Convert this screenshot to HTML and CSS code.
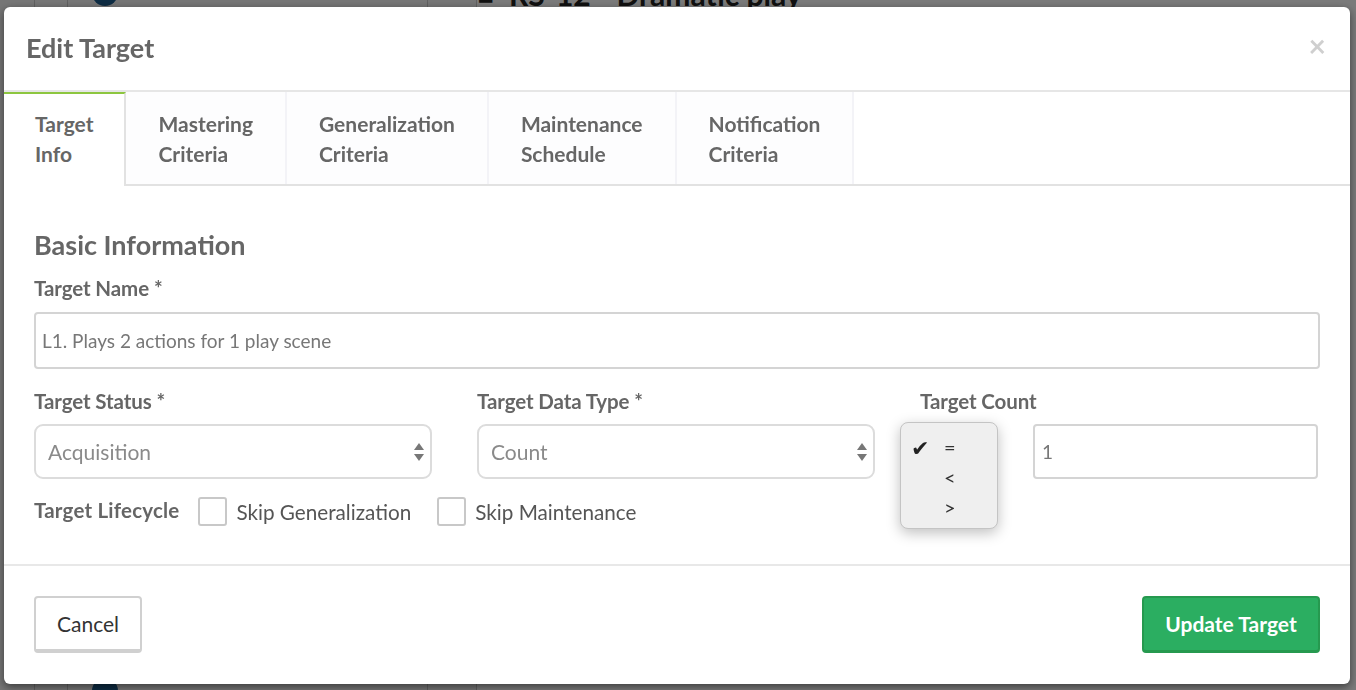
FILE: index.html
```html
<!DOCTYPE html>
<html>
<head>
<meta charset="utf-8">
<title>Edit Target</title>
<link rel="stylesheet" href="styles.css">
</head>
<body>
<div class="page">
  <div class="page-cols">
    <div class="pc pc1"></div>
    <div class="pc pc2"></div>
    <div class="pc pc3"><span class="avatar"></span><span class="avatar bottom"></span></div>
    <div class="pc pc4"></div>
    <div class="pc pc5"><span class="page-title">&#8801; &nbsp;RS-12 - Dramatic play</span></div>
  </div>
</div>
<div class="backdrop"></div>
<div class="modal">
  <div class="modal-header">
    <h4 class="modal-title">Edit Target</h4>
    <span class="close">&times;</span>
  </div>
  <div class="tabs">
    <div class="tab active">Target<br>Info</div>
    <div class="tab">Mastering<br>Criteria</div>
    <div class="tab">Generalization<br>Criteria</div>
    <div class="tab">Maintenance<br>Schedule</div>
    <div class="tab">Notification<br>Criteria</div>
  </div>
  <div class="modal-body">
    <h3 class="section-title">Basic Information</h3>
    <label class="lbl first">Target Name *</label>
    <div class="text-input wide">L1. Plays 2 actions for 1 play scene</div>
    <div class="row3">
      <div class="col">
        <label class="lbl">Target Status *</label>
        <div class="select">Acquisition<span class="arrows"><svg width="12" height="20" viewBox="0 0 12 20"><path d="M6 1 L11 8 L1 8 Z" fill="#777"/><path d="M1 12 L11 12 L6 19 Z" fill="#777"/></svg></span></div>
      </div>
      <div class="col">
        <label class="lbl">Target Data Type *</label>
        <div class="select">Count<span class="arrows"><svg width="12" height="20" viewBox="0 0 12 20"><path d="M6 1 L11 8 L1 8 Z" fill="#777"/><path d="M1 12 L11 12 L6 19 Z" fill="#777"/></svg></span></div>
      </div>
      <div class="col">
        <label class="lbl">Target Count</label>
        <div class="count-row">
          <div class="mini-select">
            <div class="popup">
              <div class="opt"><span class="chk">&#10004;</span><span>=</span></div>
              <div class="opt"><span class="chk"></span><span>&lt;</span></div>
              <div class="opt"><span class="chk"></span><span>&gt;</span></div>
            </div>
          </div>
          <div class="text-input count">1</div>
        </div>
      </div>
    </div>
    <div class="lifecycle">
      <span class="lbl inline">Target Lifecycle</span>
      <span class="cb"></span><span class="cb-text">Skip Generalization</span>
      <span class="cb"></span><span class="cb-text">Skip Maintenance</span>
    </div>
  </div>
  <div class="modal-footer">
    <button class="btn btn-default">Cancel</button>
    <button class="btn btn-success">Update Target</button>
  </div>
</div>
</body>
</html>
```

FILE: styles.css
```css
* { box-sizing: border-box; }
html, body { margin: 0; padding: 0; }
body {
  font-family: Lato, "Open Sans", "Liberation Sans", sans-serif;
  background: #fff;
  width: 1356px;
  height: 690px;
  overflow: hidden;
}

/* background page */
.page { height: 690px; background: #f4f4f4; }
.page-cols { display: flex; height: 690px; }
.pc { border-right: 1px solid #c8c8c8; height: 690px; position: relative; }
.pc1 { width: 35px; }
.pc2 { width: 33px; }
.pc3 { width: 360px; }
.pc4 { width: 49px; }
.pc5 { flex: 1; border-right: 0; background: #fff; }
.avatar {
  position: absolute; left: 24px; top: -20px;
  width: 26px; height: 26px; border-radius: 50%; background: #1d5d8c;
}
.avatar.bottom { top: 678px; }
.page-title {
  position: absolute; left: 0; top: -24px;
  font-size: 30px; font-weight: 700; color: #222; white-space: nowrap;
}

.backdrop {
  position: fixed; inset: 0;
  background: rgba(0,0,0,0.52);
}

/* modal */
.modal {
  position: fixed; left: 4px; top: 7px;
  width: 1346px; height: 677px;
  background: #fff;
  border-radius: 6px;
  box-shadow: 0 3px 9px rgba(0,0,0,0.5);
  display: flex; flex-direction: column;
  overflow: hidden;
}
.modal-header {
  height: 85px;
  padding: 0 24px 0 22px;
  display: flex; align-items: center; justify-content: space-between;
  border-bottom: 2px solid #e6e6e6;
}
.modal-title {
  margin: 0; font-size: 27px; font-weight: 700; color: #666;
  position: relative; top: -1px;
}
.close { font-size: 30px; color: #cfcfcf; font-weight: 700; line-height: 1; position: relative; top: -4px; }

.tabs {
  display: flex;
  height: 94px;
  border-bottom: 2px solid #e2e2e2;
}
.tab {
  padding: 17px 32px 0 32px;
  font-size: 21px; font-weight: 700; line-height: 30px; color: #666;
  background: #fdfdfe;
  border-right: 2px solid #f3f3f7;
}
.tab.active {
  background: #fff;
  border-top: 2px solid #8dc63f;
  border-right: 2px solid #e2e2e2;
  padding-left: 31px; padding-right: 31px; padding-top: 15px;
  margin-bottom: -2px;
  position: relative;
}

.modal-body {
  padding: 0 30px;
  height: 380px;
  border-bottom: 2px solid #e8e8e8;
}
.section-title {
  margin: 44px 0 0 0;
  font-size: 27px; font-weight: 700; color: #666; line-height: 30px;
}
.lbl {
  display: block;
  font-size: 20.5px; font-weight: 700; color: #666; line-height: 24px;
  margin-top: 9px;
  letter-spacing: -0.1px;
}
.lbl.first { margin-top: 16px; }
.text-input {
  border: 2px solid #d4d4d4; border-radius: 4px;
  font-size: 19px; color: #777;
  display: flex; align-items: center;
  padding: 0 6px;
}
.wide { height: 57px; margin-top: 12px; }

.row3 {
  display: grid;
  grid-template-columns: 398px 398px 1fr;
  column-gap: 45px;
  margin-top: 4px;
}
.row3 .lbl { margin-top: 16px; }
.select {
  margin-top: 11px;
  height: 55px;
  border: 2px solid #dcdcdc; border-radius: 9px;
  font-size: 21px; color: #8a8a8a;
  display: flex; align-items: center; justify-content: space-between;
  padding: 0 5px 0 12px;
}
.arrows { display: flex; align-items: center; }

.count-row { display: flex; margin-top: 11px; }
.mini-select { width: 113px; height: 55px; position: relative; }
.popup {
  position: absolute; left: -20px; top: -2px;
  width: 98px; height: 107px;
  background: #efefef;
  border: 1px solid #c4c4c4;
  border-radius: 8px;
  box-shadow: 0 4px 14px rgba(0,0,0,0.25);
  padding-top: 9px;
  font-size: 20px; color: #333;
}
.opt { display: flex; align-items: center; height: 30px; padding-left: 10px; }
.chk { width: 33px; font-size: 22px; color: #222; }
.count { height: 55px; font-size: 19px; padding-left: 7px; flex: 0 0 285px; }

.lifecycle {
  display: flex; align-items: center;
  margin-top: 18px;
}
.lbl.inline { display: inline-block; margin: 0 19px 0 0; position: relative; top: -2px; letter-spacing: 0.2px; }
.cb {
  width: 29px; height: 29px;
  border: 2px solid #c8c8c8; border-radius: 3px; background: #fff;
}
.cb-text { font-size: 20.7px; color: #555; margin: 0 26px 0 9px; }

.modal-footer {
  flex: 1;
  padding: 0 30px;
  display: flex; align-items: center; justify-content: space-between;
}
.btn {
  font-family: Lato, "Open Sans", "Liberation Sans", sans-serif;
  font-size: 21px; height: 57px; border-radius: 4px; cursor: pointer;
  position: relative; top: -1px;
}
.btn-default {
  width: 108px; background: #fff; color: #333;
  border: 2px solid #d0d0d0; border-bottom-width: 4px;
}
.btn-success {
  width: 178px; background: #2bae61; color: #fff; font-weight: 700;
  border: 2px solid #26994f; border-bottom-width: 3px;
}
```
